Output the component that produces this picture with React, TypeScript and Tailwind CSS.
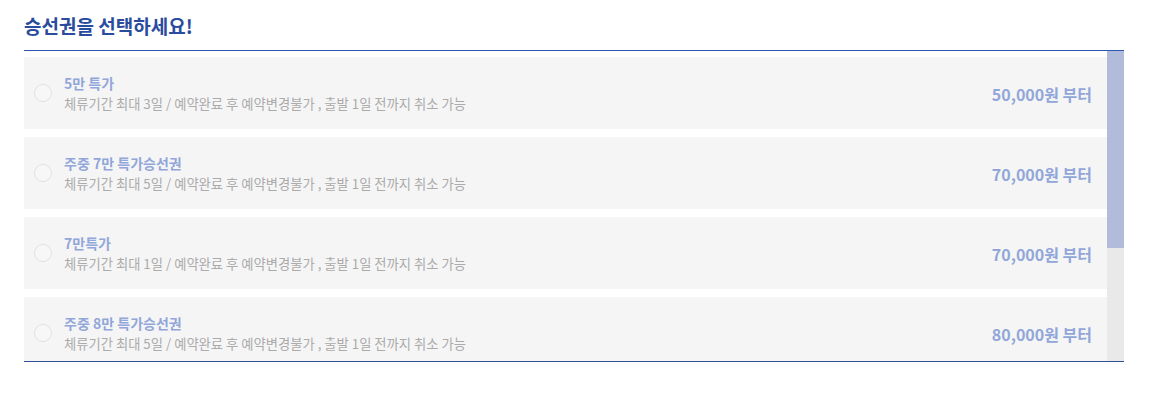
const tickets = [
  { name: '5만 특가', days: 3, price: '50,000' },
  { name: '주중 7만 특가승선권', days: 5, price: '70,000' },
  { name: '7만특가', days: 1, price: '70,000' },
  { name: '주중 8만 특가승선권', days: 5, price: '80,000' },
];

export default function App() {
  return (
    <div className="min-h-[408px] bg-white pl-6 pr-[27px] pt-[13px] font-['Noto_Sans_CJK_KR',sans-serif]">
      <h2 className="text-[19px] leading-[26px] font-bold text-[#2a4c9e]">승선권을 선택하세요!</h2>
      <div className="mt-[11px] flex h-[312px] border-t border-b border-t-[#2f56b0] border-b-[#2d4e96]">
        <ul className="min-w-0 flex-1 overflow-hidden pt-[6px]">
          {tickets.map((t) => (
            <TicketRow key={t.name} {...t} />
          ))}
        </ul>
        {/* scrollbar */}
        <div className="w-[17px] shrink-0 bg-[#e9e9e9]">
          <div className="h-[197px] bg-[#b0bcd9]" />
        </div>
      </div>
    </div>
  );
}

type TicketRowProps = {
  name: string;
  days: number;
  price: string;
};

function TicketRow({ name, days, price }: TicketRowProps) {
  return (
    <li className="mb-2 flex h-[72px] items-center bg-[#f5f5f5] pl-[10px] pr-[15px]">
      <span className="h-[18px] w-[18px] shrink-0 rounded-full border border-[#e2e2e2] bg-[#f7f7f7]" />
      <div className="ml-[12px] flex flex-col">
        <span className="text-[14px] leading-[18px] font-bold text-[#92a7d9]">{name}</span>
        <span className="mt-[3px] text-[13.3px] leading-[18px] text-[#ababab]">
          체류기간 최대 {days}일 / 예약완료 후 예약변경불가 , 출발 1일 전까지 취소 가능
        </span>
      </div>
      <span className="ml-auto pt-[2px] text-[16px] font-bold text-[#92a7d9]">{price}원 부터</span>
    </li>
  );
}
